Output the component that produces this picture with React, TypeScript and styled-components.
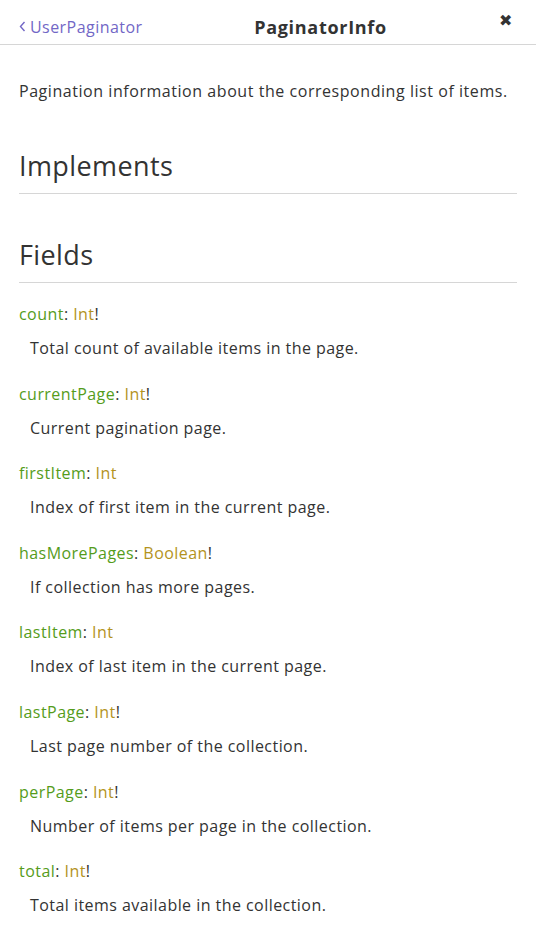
import React from 'react';
import styled, { createGlobalStyle } from 'styled-components';

const GlobalStyle = createGlobalStyle`
  html, body {
    margin: 0;
    padding: 0;
    background: #fff;
  }
  body {
    font-family: 'Open Sans', 'Noto Sans', sans-serif;
    color: #333;
    letter-spacing: 0.45px;
  }
`;

const Panel = styled.div`
  width: 536px;
  min-height: 937px;
  background: #fff;
`;

const Header = styled.div`
  display: flex;
  align-items: center;
  height: 45px;
  padding: 9px 19px 0;
  box-sizing: border-box;
  border-bottom: 1px solid #d6d6d6;
`;

const BackLink = styled.a`
  display: flex;
  align-items: center;
  gap: 4px;
  font-size: 16px;
  color: #7267c6;
  cursor: pointer;
`;

const Title = styled.div`
  flex: 1;
  text-align: center;
  font-size: 18px;
  font-weight: 700;
  letter-spacing: 0.7px;
  color: #333;
`;

const CloseButton = styled.div`
  margin-right: 5px;
  margin-top: -14px;
  font-size: 16px;
  color: #333;
`;

const Content = styled.div`
  padding: 0 19px;
`;

const Description = styled.p`
  margin: 35px 0 0;
  font-size: 16px;
  line-height: 22px;
  letter-spacing: 0.55px;
`;

const SectionTitle = styled.h2<{ $top: number }>`
  margin: ${(p) => p.$top}px 0 0;
  padding-bottom: 9px;
  border-bottom: 1px solid #d6d6d6;
  font-size: 27px;
  font-weight: 400;
  letter-spacing: 0.4px;
  line-height: 36px;
  color: #333;
`;

const FieldList = styled.div`
  display: flex;
  flex-direction: column;
  gap: 23.6px;
  margin-top: 20px;
`;

const Field = styled.div`
  display: flex;
  flex-direction: column;
  gap: 12px;
`;

const Signature = styled.div`
  font-size: 16px;
  line-height: 22px;
`;

const FieldName = styled.span`
  color: #559c1b;
`;

const TypeName = styled.span`
  color: #b3931d;
`;

const FieldDesc = styled.div`
  padding-left: 11px;
  font-size: 16px;
  line-height: 22px;
`;

const fields = [
  { name: 'count', type: 'Int', required: true, desc: 'Total count of available items in the page.' },
  { name: 'currentPage', type: 'Int', required: true, desc: 'Current pagination page.' },
  { name: 'firstItem', type: 'Int', required: false, desc: 'Index of first item in the current page.' },
  { name: 'hasMorePages', type: 'Boolean', required: true, desc: 'If collection has more pages.' },
  { name: 'lastItem', type: 'Int', required: false, desc: 'Index of last item in the current page.' },
  { name: 'lastPage', type: 'Int', required: true, desc: 'Last page number of the collection.' },
  { name: 'perPage', type: 'Int', required: true, desc: 'Number of items per page in the collection.' },
  { name: 'total', type: 'Int', required: true, desc: 'Total items available in the collection.' },
];

export default function App() {
  return (
    <>
      <GlobalStyle />
      <Panel>
        <Header>
          <BackLink>
            <svg width="7" height="11" viewBox="0 0 7 11">
              <path d="M5.5 1 L1.5 5.5 L5.5 10" stroke="#7267c6" strokeWidth="1.4" fill="none" />
            </svg>
            UserPaginator
          </BackLink>
          <Title>PaginatorInfo</Title>
          <CloseButton>✖</CloseButton>
        </Header>
        <Content>
          <Description>Pagination information about the corresponding list of items.</Description>
          <SectionTitle $top={46}>Implements</SectionTitle>
          <SectionTitle $top={43}>Fields</SectionTitle>
          <FieldList>
            {fields.map((f) => (
              <Field key={f.name}>
                <Signature>
                  <FieldName>{f.name}</FieldName>: <TypeName>{f.type}</TypeName>
                  {f.required ? '!' : ''}
                </Signature>
                <FieldDesc>{f.desc}</FieldDesc>
              </Field>
            ))}
          </FieldList>
        </Content>
      </Panel>
    </>
  );
}
